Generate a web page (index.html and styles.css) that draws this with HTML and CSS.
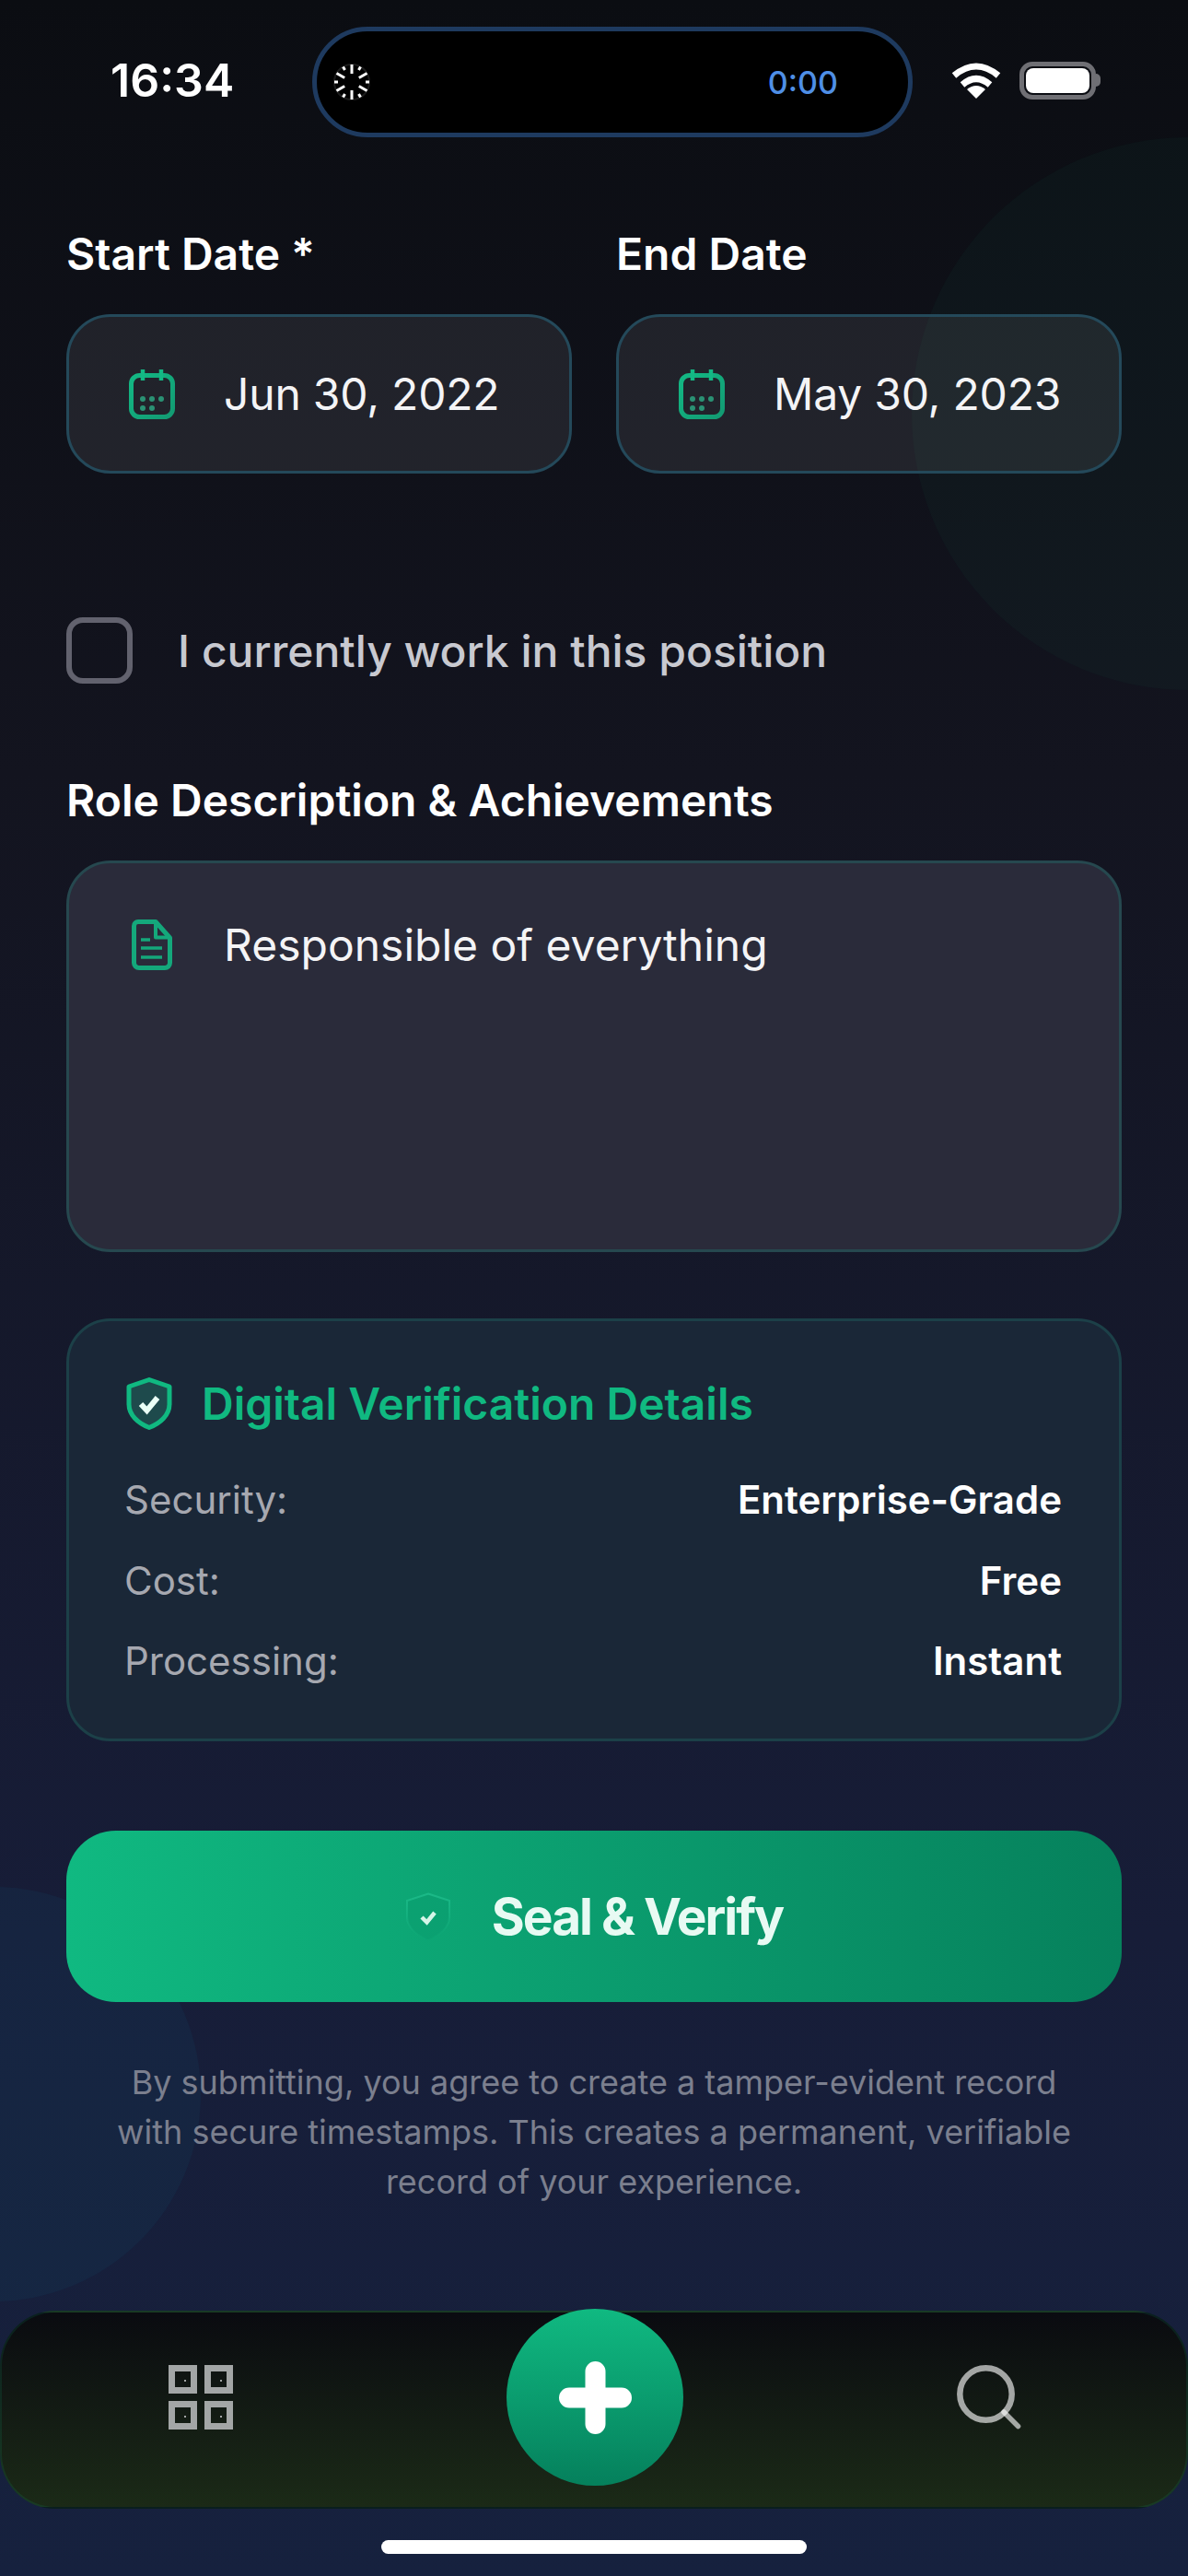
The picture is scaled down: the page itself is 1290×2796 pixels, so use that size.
FILE: index.html
```html
<!DOCTYPE html>
<html lang="en">
<head>
    <meta charset="UTF-8">
    <meta name="viewport" content="width=device-width, initial-scale=1.0">
    <title>Add Experience</title>
    <link rel="stylesheet" href="styles.css">
</head>
<body>
    <div class="phone">
        <div class="blob blob-top"></div>
        <div class="blob blob-bottom"></div>

        <!-- Status bar -->
        <header class="status-bar">
            <span class="time">16:34</span>
            <div class="island">
                <svg class="spinner" viewBox="0 0 40 40" fill="none" stroke="#fff" stroke-width="3">
                    <circle cx="20" cy="20" r="19" stroke="#1c1c1c" stroke-width="2"/>
                    <path d="M20 1V11M20 29V39M27.800 15.500L36.500 10.500M27.800 24.500L36.500 29.500M12.200 24.500L3.500 29.500M12.200 15.500L3.500 10.500"/>
                    <path d="M27.500 7L29.500 3.500M27.500 33L29.500 36.500M12.500 33L10.500 36.500M12.500 7L10.500 3.500M35 20H39M1 20H5"/>
                </svg>
                <span class="island-timer">0:00</span>
            </div>
            <div class="status-icons">
                <svg class="wifi" viewBox="0 0 54 39" fill="none" stroke="#fff" stroke-width="7">
                    <path d="M3 14Q27 -6 51 14"/>
                    <path d="M12 24Q27 11 42 24"/>
                    <path d="M27 39L17 29Q27 21 37 29Z" fill="#fff" stroke="none"/>
                </svg>
                <div class="battery"><div class="battery-fill"></div></div>
                <div class="battery-nub"></div>
            </div>
        </header>

        <main class="form">
            <!-- Dates -->
            <div class="date-row">
                <div>
                    <div class="label">Start Date *</div>
                    <div class="field date-field">
                        <svg class="calendar-icon" viewBox="0 0 50 54" fill="none">
                            <use href="#calendar"/>
                        </svg>
                        <span>Jun 30, 2022</span>
                    </div>
                </div>
                <div>
                    <div class="label">End Date</div>
                    <div class="field date-field">
                        <svg class="calendar-icon" viewBox="0 0 50 54" fill="none">
                            <use href="#calendar"/>
                        </svg>
                        <span>May 30, 2023</span>
                    </div>
                </div>
            </div>

            <div class="check-row">
                <div class="checkbox"></div>
                <span>I currently work in this position</span>
            </div>

            <!-- Description -->
            <div class="label">Role Description &amp; Achievements</div>
            <div class="field text-field">
                <svg class="doc-icon" viewBox="0 0 44 55" fill="none" stroke="#14a87b" stroke-width="5" stroke-linejoin="round">
                    <path d="M7 2.500H26L41.500 20V47A5.500 5.500 0 0 1 36 52.500H8A5.500 5.500 0 0 1 2.500 47V7A4.500 4.500 0 0 1 7 2.500Z"/>
                    <path d="M26 3V19.500H41" stroke-width="4"/>
                    <path d="M10 22H20M10 31H33M10 41H33" stroke-width="3.500"/>
                </svg>
                <span>Responsible of everything</span>
            </div>

            <!-- Verification details -->
            <section class="details">
                <h2 class="details-title">
                    <svg class="shield-icon" viewBox="0 0 50 57">
                        <path d="M25 2.500L47 10V29C47 41 37 50 25 54.500C13 50 3 41 3 29V10Z" fill="#1e4a4c" stroke="#10b981" stroke-width="5" stroke-linejoin="round"/>
                        <path d="M16 29L22.500 36L34 22" fill="none" stroke="#eafff6" stroke-width="6"/>
                    </svg>
                    Digital Verification Details
                </h2>
                <div class="detail-row"><span>Security:</span><strong>Enterprise-Grade</strong></div>
                <div class="detail-row"><span>Cost:</span><strong>Free</strong></div>
                <div class="detail-row"><span>Processing:</span><strong>Instant</strong></div>
            </section>

            <button class="seal-button">
                <svg class="seal-shield" viewBox="0 0 50 52">
                    <defs>
                        <linearGradient id="seal-fade" x1="0" y1="0" x2="0" y2="1">
                            <stop offset="0" stop-color="#1fbf8d" stop-opacity="0.8"/>
                            <stop offset="1" stop-color="#1fbf8d" stop-opacity="0"/>
                        </linearGradient>
                    </defs>
                    <path d="M25 1.500L48 9V27C48 38 37 47 25 51C13 47 2 38 2 27V9Z" fill="#07966a" fill-opacity="0.3" stroke="url(#seal-fade)" stroke-width="2"/>
                    <path d="M18 27L23.500 32.500L32 22" fill="none" stroke="#d5f5e8" stroke-width="4.500"/>
                </svg>
                Seal &amp; Verify
            </button>

            <p class="legal">By submitting, you agree to create a tamper-evident record with secure timestamps. This creates a permanent, verifiable record of your experience.</p>
        </main>

        <!-- Bottom navigation -->
        <nav class="bottom-nav">
            <svg class="nav-icon" viewBox="0 0 70 70">
                <path d="M0 0h31v31H0zM7 7v17h17V7zM39 0h31v31H39zM46 7v17h17V7zM0 39h31v31H0zM7 46v17h17V46zM39 39h31v31H39zM46 46v17h17V46z" fill="#a3a6a6" fill-rule="evenodd"/>
                <path d="M17 16h2v2h-2zM56 16h2v2h-2zM17 55h2v2h-2zM56 55h2v2h-2z" fill="#a3a6a6"/>
            </svg>
            <button class="add-button">
                <svg viewBox="0 0 79 79" class="plus-icon">
                    <path d="M39.500 11V68M11 39.500H68" stroke="#fff" stroke-width="22" stroke-linecap="round"/>
                </svg>
            </button>
            <svg class="nav-icon" viewBox="0 0 70 70" fill="none" stroke="#fff">
                <circle cx="31.500" cy="31.500" r="28.200" stroke-width="6.500" stroke-opacity="0.62"/>
                <path d="M51 51L66.500 66.500" stroke-width="5.500" stroke-linecap="round" stroke-opacity="0.62"/>
            </svg>
        </nav>

        <div class="home-bar"></div>
    </div>

    <svg class="defs" width="0" height="0">
        <defs>
            <linearGradient id="calendar-green" x1="0" y1="0" x2="1" y2="1">
                <stop offset="0" stop-color="#13b884"/>
                <stop offset="1" stop-color="#129a72"/>
            </linearGradient>
            <g id="calendar">
                <rect x="2.500" y="6.500" width="45" height="45" rx="9" stroke="url(#calendar-green)" stroke-width="5"/>
                <path d="M2.500 20.500H47.500" stroke="url(#calendar-green)" stroke-width="5"/>
                <path d="M15 0V12M35 0V12" stroke="#13b884" stroke-width="4.500"/>
                <g fill="#2a9274">
                    <circle cx="15" cy="32" r="3"/>
                    <circle cx="25" cy="32" r="3"/>
                    <circle cx="35" cy="32" r="3"/>
                    <circle cx="15" cy="42" r="3"/>
                    <circle cx="25" cy="42" r="3"/>
                </g>
            </g>
        </defs>
    </svg>
</body>
</html>
```

FILE: styles.css
```css
/* Reset and base styles */
* {
    margin: 0;
    padding: 0;
    box-sizing: border-box;
}

body {
    font-family: Inter, "Liberation Sans", sans-serif;
    background-color: #0c0d13;
    color: #fff;
}

.phone {
    position: relative;
    width: 1290px;
    height: 2796px;
    overflow: hidden;
    display: flex;
    flex-direction: column;
    background: linear-gradient(180deg, #0b0d12 0%, #13141f 30%, #171d38 75%, #16213e 100%);
}

.defs {
    position: absolute;
}

/* Background circles */
.blob {
    position: absolute;
    border-radius: 50%;
}

.blob-top {
    width: 600px;
    height: 600px;
    left: 990px;
    top: 149px;
    background-color: rgba(16, 185, 129, 0.04);
}

.blob-bottom {
    width: 450px;
    height: 450px;
    left: -232px;
    top: 2048px;
    background-color: rgba(20, 90, 120, 0.12);
}

/* Status bar */
.status-bar {
    position: relative;
    height: 178px;
    padding: 29px 0 0 120px;
    display: flex;
    align-items: flex-start;
}

.time {
    width: 219px;
    height: 120px;
    line-height: 116px;
    font-size: 50px;
    font-weight: 600;
}

.island {
    width: 652px;
    height: 120px;
    background-color: #000;
    border: 5px solid #1e3a5f;
    border-radius: 60px;
    display: flex;
    align-items: center;
    justify-content: space-between;
    padding: 0 76px 0 18px;
}

.spinner {
    width: 40px;
    height: 40px;
}

.island-timer {
    font-size: 34px;
    font-weight: 500;
    color: #4f8fe6;
}

.status-icons {
    height: 120px;
    margin-left: 42px;
    display: flex;
    align-items: center;
    padding-bottom: 4px;
}

.wifi {
    width: 54px;
    height: 39px;
    margin-right: 20px;
}

.battery {
    width: 83px;
    height: 41px;
    border: 5px solid #6f6f74;
    border-radius: 14px;
    padding: 2px;
}

.battery-fill {
    height: 100%;
    background-color: #fff;
    border-radius: 8px;
}

.battery-nub {
    width: 5px;
    height: 14px;
    background-color: #6f6f74;
    border-radius: 0 7px 7px 0;
}

/* Form */
.form {
    position: relative;
    padding: 69px 72px 0;
    flex: 1;
}

.date-row {
    display: grid;
    grid-template-columns: 1fr 1fr;
    gap: 48px;
}

.label {
    font-size: 48px;
    line-height: 58px;
    font-weight: 600;
    margin-bottom: 36px;
}

.field {
    background-color: rgba(255, 255, 255, 0.08);
    border: 3px solid #24495a;
    border-radius: 48px;
    font-size: 48px;
    color: #f4f4f6;
}

.date-field {
    height: 173px;
    display: flex;
    align-items: center;
    padding-left: 65px;
}

.date-field span {
    margin-left: 53px;
    letter-spacing: -0.200px;
}

.calendar-icon {
    width: 50px;
    height: 54px;
    flex-shrink: 0;
}

/* Checkbox */
.check-row {
    display: flex;
    align-items: center;
    gap: 49px;
    margin: 156px 0 98px;
    font-size: 48px;
    font-weight: 500;
    color: #c8c9d0;
}

.checkbox {
    width: 72px;
    height: 72px;
    border: 6px solid #62626e;
    border-radius: 18px;
}

/* Description */
.text-field {
    height: 425px;
    display: flex;
    align-items: flex-start;
    padding: 61px 0 0 68px;
    background-color: #2a2b3a;
    border-color: #26484f;
    line-height: 68px;
}

.text-field span {
    margin-left: 56px;
    margin-top: -6px;
}

.doc-icon {
    width: 44px;
    height: 55px;
    flex-shrink: 0;
}

/* Verification details */
.details {
    height: 459px;
    margin-top: 72px;
    padding: 59px 62px 0 60px;
    background-color: #1a2737;
    border: 3px solid #1c4048;
    border-radius: 48px;
}

.details-title {
    display: flex;
    align-items: center;
    gap: 32px;
    height: 60px;
    margin-bottom: 31px;
    font-size: 48px;
    font-weight: 600;
    color: #10b981;
}

.shield-icon {
    width: 50px;
    height: 57px;
    margin-left: 2px;
}

.detail-row {
    display: flex;
    justify-content: space-between;
    align-items: center;
    height: 87.500px;
    font-size: 42px;
    color: #a6a8b0;
}

.detail-row strong {
    font-weight: 600;
    color: #fff;
}

/* Main button */
.seal-button {
    width: 100%;
    height: 186px;
    margin-top: 97px;
    border: none;
    border-radius: 54px;
    background: linear-gradient(90deg, #10b981 0%, #06815c 100%);
    color: #e8faf3;
    font-family: inherit;
    font-size: 55px;
    font-weight: 700;
    letter-spacing: -2px;
    display: flex;
    align-items: center;
    justify-content: center;
    gap: 44px;
}

.seal-shield {
    width: 50px;
    height: 52px;
}

.legal {
    margin-top: 60px;
    padding: 0 30px;
    font-size: 36px;
    line-height: 54px;
    text-align: center;
    color: #7b7f8e;
}

/* Bottom navigation */
.bottom-nav {
    position: absolute;
    left: 0;
    right: 0;
    top: 2508px;
    height: 215px;
    padding: 57px 179px 0 181px;
    display: flex;
    justify-content: space-between;
    align-items: flex-start;
    background: linear-gradient(180deg, #0a0b10 0%, #1b2a17 100%);
    border: 2px solid rgba(16, 185, 129, 0.12);
    border-radius: 60px;
}

.nav-icon {
    width: 70px;
    height: 70px;
}

.add-button {
    position: absolute;
    left: 548px;
    top: -4px;
    width: 192px;
    height: 192px;
    border: none;
    border-radius: 50%;
    background: linear-gradient(180deg, #10b981 0%, #05805c 100%);
    display: flex;
    align-items: center;
    justify-content: center;
}

.plus-icon {
    width: 79px;
    height: 79px;
}

.home-bar {
    position: absolute;
    left: 414px;
    top: 2757px;
    width: 462px;
    height: 15px;
    background-color: #fff;
    border-radius: 8px;
}
```
